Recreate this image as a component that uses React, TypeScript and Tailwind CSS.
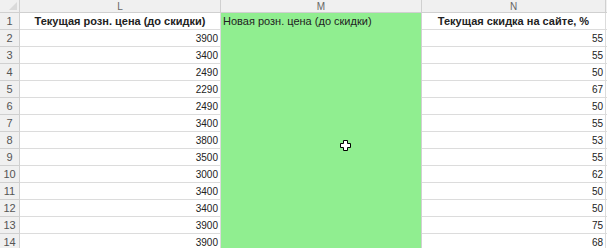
const rows = [
  { n: 2, price: "3900", disc: "55" },
  { n: 3, price: "3400", disc: "55" },
  { n: 4, price: "2490", disc: "50" },
  { n: 5, price: "2290", disc: "67" },
  { n: 6, price: "2490", disc: "50" },
  { n: 7, price: "3400", disc: "55" },
  { n: 8, price: "3800", disc: "53" },
  { n: 9, price: "3500", disc: "55" },
  { n: 10, price: "3000", disc: "62" },
  { n: 11, price: "3400", disc: "50" },
  { n: 12, price: "3400", disc: "50" },
  { n: 13, price: "3900", disc: "75" },
  { n: 14, price: "3900", disc: "68" },
];

const colHead =
  "h-[13px] bg-[#f0f0f0] border-r border-b border-[#d0d0d0] flex items-center justify-center text-[10px] text-[#666]";
const rowHead =
  "h-[17px] bg-[#f0f0f0] border-r border-b border-[#d0d0d0] flex items-center justify-center text-[11px] text-[#555]";
const cell = "h-[17px] border-r border-b border-[#dcdcdc] flex items-center px-[2px] text-[10px] text-[#222]";
const green =
  "h-[17px] bg-[#90ee90] border-r border-[#d0d0d0] flex items-center px-[2px] text-[11px] text-[#222] whitespace-nowrap";

function Cursor() {
  return (
    <svg
      className="absolute left-[340px] top-[140px]"
      width="11"
      height="11"
      viewBox="0 0 11 11"
    >
      <path
        d="M3.5 0.5h4v3h3v4h-3v3h-4v-3h-3v-4h3z"
        fill="#fff"
        stroke="#000"
        strokeWidth="1"
      />
    </svg>
  );
}

export default function App() {
  return (
    <div className="relative w-[607px] h-[248px] overflow-hidden bg-white font-['Liberation_Sans',Arial,sans-serif]">
      <div className="grid grid-cols-[20px_201px_201px_184px_1fr]">
        <div className={`${colHead} relative`}>
          <div className="absolute right-[2px] bottom-[2px] w-0 h-0 border-l-[8px] border-l-transparent border-b-[8px] border-b-[#dadada]" />
        </div>
        <div className={colHead}>L</div>
        <div className={colHead}>M</div>
        <div className={colHead}>N</div>
        <div className={colHead}></div>

        <div className={rowHead}>1</div>
        <div className={`${cell} justify-center font-bold text-[11px] whitespace-nowrap`}>
          Текущая розн. цена (до скидки)
        </div>
        <div className={green}>Новая розн. цена (до скидки)</div>
        <div className={`${cell} justify-center font-bold text-[11px] whitespace-nowrap`}>
          Текущая скидка на сайте, %
        </div>
        <div className={cell}></div>

        {rows.map((r) => (
          <div key={r.n} className="contents">
            <div className={rowHead}>{r.n}</div>
            <div className={`${cell} justify-end`}>{r.price}</div>
            <div className={green}></div>
            <div className={`${cell} justify-end`}>{r.disc}</div>
            <div className={cell}></div>
          </div>
        ))}
      </div>
      <Cursor />
    </div>
  );
}
